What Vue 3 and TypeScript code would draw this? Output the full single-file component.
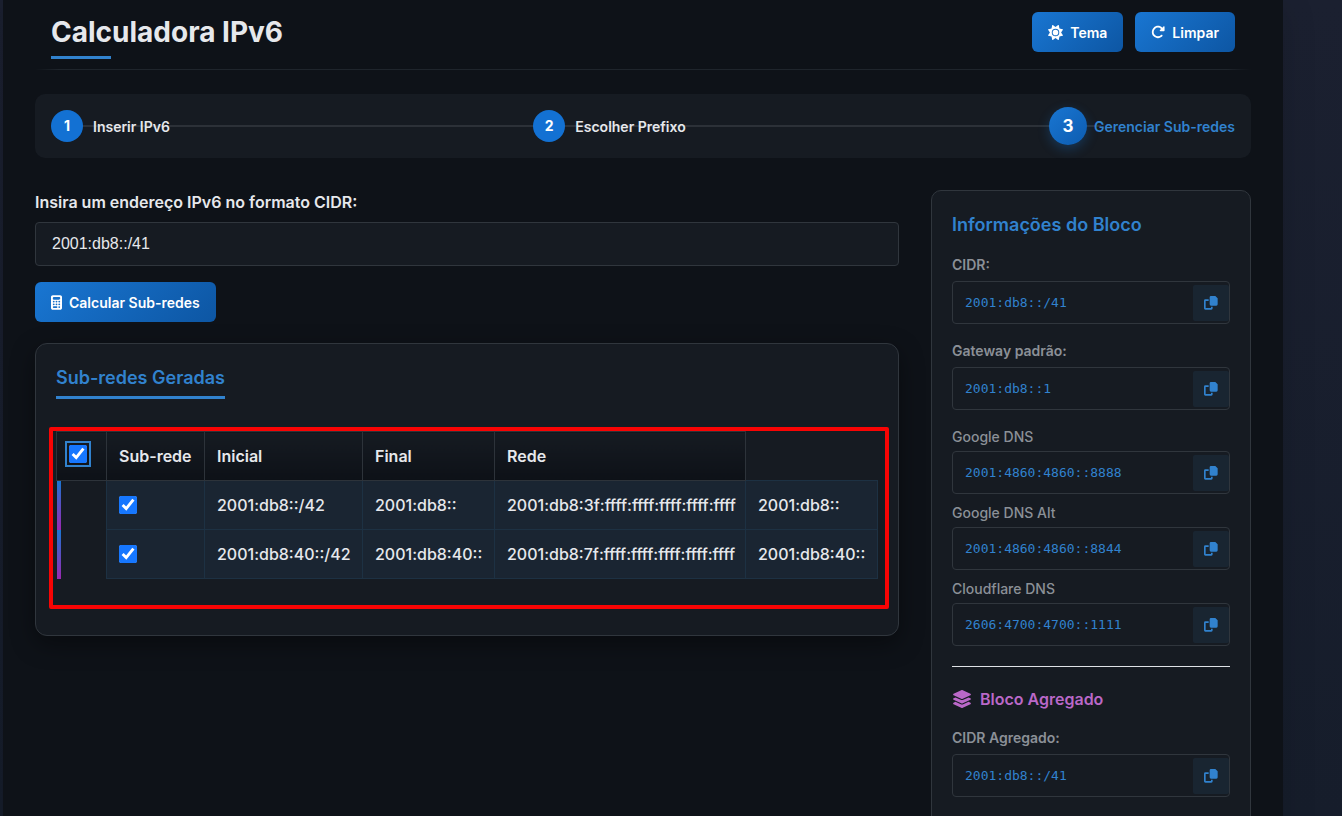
<script setup lang="ts">
import { ref } from 'vue'

interface Field {
  label: string
  value: string
  strong: boolean
}

const address = ref('2001:db8::/41')
const allSelected = ref(true)

const steps = ['Inserir IPv6', 'Escolher Prefixo', 'Gerenciar Sub-redes']
const headings = ['Sub-rede', 'Inicial', 'Final', 'Rede']

const rows = ref([
  { selected: true, cells: ['2001:db8::/42', '2001:db8::', '2001:db8:3f:ffff:ffff:ffff:ffff:ffff', '2001:db8::'] },
  { selected: true, cells: ['2001:db8:40::/42', '2001:db8:40::', '2001:db8:7f:ffff:ffff:ffff:ffff:ffff', '2001:db8:40::'] },
])

const blockFields: Field[] = [
  { label: 'CIDR:', value: '2001:db8::/41', strong: true },
  { label: 'Gateway padrão:', value: '2001:db8::1', strong: true },
  { label: 'Google DNS', value: '2001:4860:4860::8888', strong: false },
  { label: 'Google DNS Alt', value: '2001:4860:4860::8844', strong: false },
  { label: 'Cloudflare DNS', value: '2606:4700:4700::1111', strong: false },
]
const aggregateFields: Field[] = [{ label: 'CIDR Agregado:', value: '2001:db8::/41', strong: true }]

const copyPath =
  'M21 0H34L41 7V25a4 4 0 0 1-4 4H21a4 4 0 0 1-4-4V4a4 4 0 0 1 4-4zM4 10H14V15H5V36H21V32H26V37a4 4 0 0 1-4 4H4a4 4 0 0 1-4-4V14a4 4 0 0 1 4-4z'

function toggleAll() {
  rows.value.forEach((row) => (row.selected = allSelected.value))
}
function clearAddress() {
  address.value = ''
}
function copy(value: string) {
  navigator.clipboard?.writeText(value)
}
</script>

<template>
  <div class="page">
    <div class="container">
      <header class="header">
        <h1>Calculadora IPv6</h1>
        <div class="actions">
          <button type="button" class="btn">
            <svg viewBox="0 0 512 512" width="15" height="15" fill="currentColor" aria-hidden="true">
              <path d="M361.5 1.2c5 2.1 8.6 6.6 9.6 11.9L391 121l107.9 19.8c5.3 1 9.8 4.6 11.9 9.6s1.5 10.7-1.6 15.2L446.9 256l62.3 90.3c3.1 4.5 3.7 10.2 1.6 15.2s-6.6 8.6-11.9 9.6L391 391 371.1 498.9c-1 5.3-4.6 9.8-9.6 11.9s-10.7 1.5-15.2-1.6L256 446.9l-90.3 62.3c-4.5 3.1-10.2 3.7-15.2 1.6s-8.6-6.6-9.6-11.9L121 391 13.1 371.1c-5.3-1-9.8-4.6-11.9-9.6s-1.5-10.7 1.6-15.2L65.1 256 2.8 165.7c-3.1-4.5-3.7-10.2-1.6-15.2s6.6-8.6 11.9-9.6L121 121 140.9 13.1c1-5.3 4.6-9.8 9.6-11.9s10.7-1.5 15.2 1.6L256 65.1 346.3 2.8c4.5-3.1 10.2-3.7 15.2-1.6zM160 256a96 96 0 1 1 192 0 96 96 0 1 1 -192 0zm224 0a128 128 0 1 0 -256 0 128 128 0 1 0 256 0z" />
            </svg>
            Tema
          </button>
          <button type="button" class="btn" @click="clearAddress">
            <svg viewBox="0 0 512 512" width="14" height="14" fill="currentColor" aria-hidden="true">
              <path d="M463.5 224H472c13.3 0 24-10.7 24-24V72c0-9.7-5.8-18.5-14.8-22.2s-19.3-1.7-26.2 5.2L413.4 96.6c-87.6-86.5-228.7-86.2-315.8 1c-87.5 87.5-87.5 229.3 0 316.8s229.3 87.5 316.8 0c12.5-12.5 12.5-32.8 0-45.3s-32.8-12.5-45.3 0c-62.5 62.5-163.8 62.5-226.3 0s-62.5-163.8 0-226.3c62.2-62.2 162.7-62.5 225.3-1L327 183c-6.9 6.9-8.9 17.2-5.2 26.2s12.5 14.8 22.2 14.8H463.5z" />
            </svg>
            Limpar
          </button>
        </div>
      </header>

      <ol class="stepper">
        <li v-for="(step, i) in steps" :key="step" class="step" :class="{ active: i === 2 }">
          <span class="dot">{{ i + 1 }}</span>
          <span class="step-label">{{ step }}</span>
        </li>
      </ol>

      <div class="columns">
        <main>
          <form @submit.prevent>
            <label class="input-label" for="cidr">Insira um endereço IPv6 no formato CIDR:</label>
            <input id="cidr" v-model="address" class="cidr" type="text" />
            <button type="submit" class="btn">
              <svg viewBox="0 0 384 512" width="11" height="15" aria-hidden="true">
                <path fill="currentColor" fill-rule="evenodd" d="M64 0C28.7 0 0 28.7 0 64V448c0 35.3 28.7 64 64 64H320c35.3 0 64-28.7 64-64V64c0-35.3-28.7-64-64-64H64zM96 64H288c17.7 0 32 14.3 32 32v32c0 17.7-14.3 32-32 32H96c-17.7 0-32-14.3-32-32V96c0-17.7 14.3-32 32-32zM64 224a32 32 0 1 0 64 0a32 32 0 1 0-64 0zM160 224a32 32 0 1 0 64 0a32 32 0 1 0-64 0zM256 224a32 32 0 1 0 64 0a32 32 0 1 0-64 0zM64 320a32 32 0 1 0 64 0a32 32 0 1 0-64 0zM160 320a32 32 0 1 0 64 0a32 32 0 1 0-64 0zM256 320a32 32 0 1 0 64 0a32 32 0 1 0-64 0zM96 384H192a32 32 0 1 1 0 64H96a32 32 0 1 1 0-64zM256 416a32 32 0 1 0 64 0a32 32 0 1 0-64 0z" />
              </svg>
              Calcular Sub-redes
            </button>
          </form>

          <section class="card results">
            <h2>Sub-redes Geradas</h2>
            <div class="table-area">
              <table>
                <colgroup>
                  <col class="col-select" />
                  <col class="col-check" />
                  <col class="col-subnet" />
                  <col class="col-start" />
                  <col class="col-end" />
                  <col />
                </colgroup>
                <thead>
                  <tr>
                    <th class="select-cell">
                      <input v-model="allSelected" class="select-all" type="checkbox" aria-label="Selecionar todas" @change="toggleAll" />
                    </th>
                    <th v-for="heading in headings" :key="heading" scope="col">{{ heading }}</th>
                  </tr>
                </thead>
                <tbody>
                  <tr v-for="row in rows" :key="row.cells[0]">
                    <td class="marker"></td>
                    <td><input v-model="row.selected" type="checkbox" :aria-label="row.cells[0]" /></td>
                    <td v-for="(cell, i) in row.cells" :key="i">{{ cell }}</td>
                  </tr>
                </tbody>
              </table>
              <div class="highlight"></div>
            </div>
          </section>
        </main>

        <aside class="card info">
          <h2>Informações do Bloco</h2>
          <div v-for="field in blockFields" :key="field.label" class="field" :class="{ strong: field.strong }">
            <span class="field-label">{{ field.label }}</span>
            <div class="value">
              <code>{{ field.value }}</code>
              <button type="button" class="copy" aria-label="Copiar" @click="copy(field.value)">
                <svg viewBox="0 0 42 42" width="14" height="14" fill="currentColor"><path :d="copyPath" /></svg>
              </button>
            </div>
          </div>
          <hr />
          <h3>
            <svg viewBox="0 0 576 512" width="20" height="18" fill="currentColor" aria-hidden="true">
              <path d="M264.5 5.2c14.9-6.9 32.1-6.9 47 0l218.6 101c8.5 3.9 13.9 12.4 13.9 21.8s-5.4 17.9-13.9 21.8l-218.6 101c-14.9 6.9-32.1 6.9-47 0L45.9 149.8C37.4 145.8 32 137.3 32 128s5.4-17.9 13.9-21.8L264.5 5.2zM476.9 209.6l53.2 24.6c8.5 3.9 13.9 12.4 13.9 21.8s-5.4 17.9-13.9 21.8l-218.6 101c-14.9 6.9-32.1 6.9-47 0L45.9 277.8C37.4 273.8 32 265.3 32 256s5.4-17.9 13.9-21.8l53.2-24.6 152 70.2c23.4 10.8 50.4 10.8 73.8 0l152-70.2zm-152 198.2l152-70.2 53.2 24.6c8.5 3.9 13.9 12.4 13.9 21.8s-5.4 17.9-13.9 21.8l-218.6 101c-14.9 6.9-32.1 6.9-47 0L45.9 405.8C37.4 401.8 32 393.3 32 384s5.4-17.9 13.9-21.8l53.2-24.6 152 70.2c23.4 10.8 50.4 10.8 73.8 0z" />
            </svg>
            Bloco Agregado
          </h3>
          <div v-for="field in aggregateFields" :key="field.label" class="field strong">
            <span class="field-label">{{ field.label }}</span>
            <div class="value">
              <code>{{ field.value }}</code>
              <button type="button" class="copy" aria-label="Copiar" @click="copy(field.value)">
                <svg viewBox="0 0 42 42" width="14" height="14" fill="currentColor"><path :d="copyPath" /></svg>
              </button>
            </div>
          </div>
        </aside>
      </div>
    </div>
  </div>
</template>

<style>
html,
body {
  background: #1a1f2e;
}
body {
  overflow: hidden;
}
</style>

<style scoped>
.page {
  height: 100vh;
  overflow: hidden;
  padding-left: 3px;
  background: linear-gradient(180deg, #1b2030, #161d2b);
  color: #e6e8ec;
  font-family: Inter, 'Liberation Sans', sans-serif;
  font-size: 16px;
  line-height: 24px;
}
.page *,
.page {
  box-sizing: border-box;
}
.container {
  max-width: 1280px;
  min-height: 100vh;
  padding: 0 32px 32px;
  background: #0e1218;
  box-shadow: 0 8px 32px rgba(0, 0, 0, 0.15);
}
h1,
h2,
h3 {
  margin: 0;
  font-weight: 600;
}
.header {
  position: relative;
  display: flex;
  align-items: flex-start;
  justify-content: space-between;
  height: 70px;
  padding: 12px 16px 0;
}
.header::after {
  content: '';
  position: absolute;
  left: 0;
  right: 0;
  bottom: 0;
  height: 1px;
  background: linear-gradient(90deg, transparent, #1f252c 2%, #1f252c 98%, transparent);
}
h1 {
  font-size: 28px;
  line-height: 40px;
  font-weight: 700;
}
h1::after {
  content: '';
  display: block;
  width: 60px;
  height: 3px;
  margin-top: 4px;
  background: #3182ce;
}
.actions {
  display: flex;
  gap: 12px;
}
.btn {
  display: inline-flex;
  align-items: center;
  gap: 7px;
  height: 40px;
  padding: 0 16px;
  border: 0;
  border-radius: 6px;
  background: linear-gradient(135deg, #1976d2, #0d56a3);
  color: #fff;
  font-family: inherit;
  font-size: 14px;
  font-weight: 600;
  cursor: pointer;
}
.stepper {
  position: relative;
  display: flex;
  align-items: center;
  justify-content: space-between;
  height: 64px;
  margin: 24px 0 32px;
  padding: 0 16px;
  border-radius: 10px;
  background: #161b22;
  list-style: none;
}
.stepper::before {
  content: '';
  position: absolute;
  left: 32px;
  right: 150px;
  top: 31px;
  height: 2px;
  background: #2c3138;
}
.step {
  position: relative;
  display: flex;
  align-items: center;
  gap: 10px;
  font-size: 14px;
  font-weight: 600;
}
.step-label {
  padding-top: 2px;
}
.dot {
  display: flex;
  align-items: center;
  justify-content: center;
  width: 32px;
  height: 32px;
  border-radius: 50%;
  background: #1371d3;
  color: #fff;
  font-weight: 700;
}
.step.active {
  gap: 7px;
  color: #3182ce;
}
.active .dot {
  width: 38px;
  height: 38px;
  background: linear-gradient(135deg, #1976d2, #0d5cb0);
  box-shadow: 0 4px 12px rgba(25, 118, 210, 0.3);
  font-size: 17px;
}
.columns {
  display: grid;
  grid-template-columns: minmax(0, 1fr) 320px;
  align-items: start;
  gap: 32px;
}
.input-label {
  display: block;
  margin-bottom: 8px;
  font-weight: 600;
}
.cidr {
  display: block;
  width: 100%;
  height: 44px;
  margin-bottom: 16px;
  padding: 0 16px;
  border: 1px solid #30363d;
  border-radius: 4px;
  outline: 0;
  background: #161b22;
  color: #e6e8ec;
  font-family: 'Liberation Sans', Arial, sans-serif;
  font-size: 16px;
}
.card {
  border: 1px solid #30363d;
  border-radius: 12px;
  background: #161b22;
}
.results {
  margin-top: 21px;
  padding: 20px 20px 56px;
  box-shadow: 0 8px 24px rgba(0, 0, 0, 0.4);
}
h2 {
  color: #3182ce;
  font-size: 18px;
  line-height: 28px;
}
.results h2 {
  width: fit-content;
  padding-bottom: 4px;
  border-bottom: 3px solid #3182ce;
}
.table-area {
  position: relative;
  margin-top: 32px;
}
table {
  width: 100%;
  table-layout: fixed;
  border-collapse: collapse;
}
.col-select {
  width: 50px;
}
.col-check {
  width: 98px;
}
.col-subnet {
  width: 158px;
}
.col-start {
  width: 132px;
}
.col-end {
  width: 251px;
}
th,
td {
  height: 49px;
  padding: 0 8px 0 12px;
  border: 1px solid #2d333a;
  text-align: left;
  white-space: nowrap;
}
th {
  background: linear-gradient(180deg, #161b22, #0d1117);
  font-weight: 600;
}
td {
  border-color: #1d3143;
  background: #1a2532;
  font-weight: 500;
}
.select-cell {
  padding: 0 8px;
}
.marker {
  padding: 0;
  border-width: 0 1px 0 0;
  background: linear-gradient(180deg, #1976d2, #9c27b0) left / 4px 100% no-repeat;
}
input[type='checkbox'] {
  display: block;
  width: 18px;
  height: 18px;
  margin: 0;
  accent-color: #1677ff;
}
input.select-all {
  margin: 0 4px 4px;
  outline: 2px solid #3182ce;
  outline-offset: 2px;
}
.highlight {
  position: absolute;
  inset: -4px -11px -30px -7px;
  border: 4px solid #f80404;
  border-radius: 2px;
  pointer-events: none;
}
.info {
  padding: 20px 20px 32px;
  border-radius: 10px;
}
.info h2 {
  margin-bottom: 15px;
}
.field {
  margin-bottom: 8px;
  color: #8b9097;
  font-size: 14px;
  font-weight: 500;
  line-height: 21px;
}
.field.strong {
  margin-bottom: 16px;
  font-weight: 600;
}
.field-label {
  display: block;
  margin-bottom: 4px;
}
.strong .field-label {
  margin-bottom: 6px;
}
.value {
  display: flex;
  align-items: center;
  justify-content: space-between;
  height: 43px;
  padding-left: 12px;
  border: 1px solid #30363d;
  border-radius: 4px;
}
code {
  color: #3182ce;
  font-family: 'DejaVu Sans Mono', monospace;
  font-size: 13px;
  font-weight: 400;
}
.copy {
  display: flex;
  align-items: center;
  justify-content: center;
  width: 36px;
  height: 36px;
  padding: 0;
  border: 0;
  border-radius: 2px;
  background: #192531;
  color: #3182ce;
  cursor: pointer;
}
hr {
  height: 1px;
  margin: 20px 0;
  border: 0;
  background: #dfe2e6;
}
h3 {
  display: flex;
  align-items: center;
  gap: 8px;
  margin-bottom: 16px;
  color: #ba68c8;
  font-size: 16px;
}
</style>
